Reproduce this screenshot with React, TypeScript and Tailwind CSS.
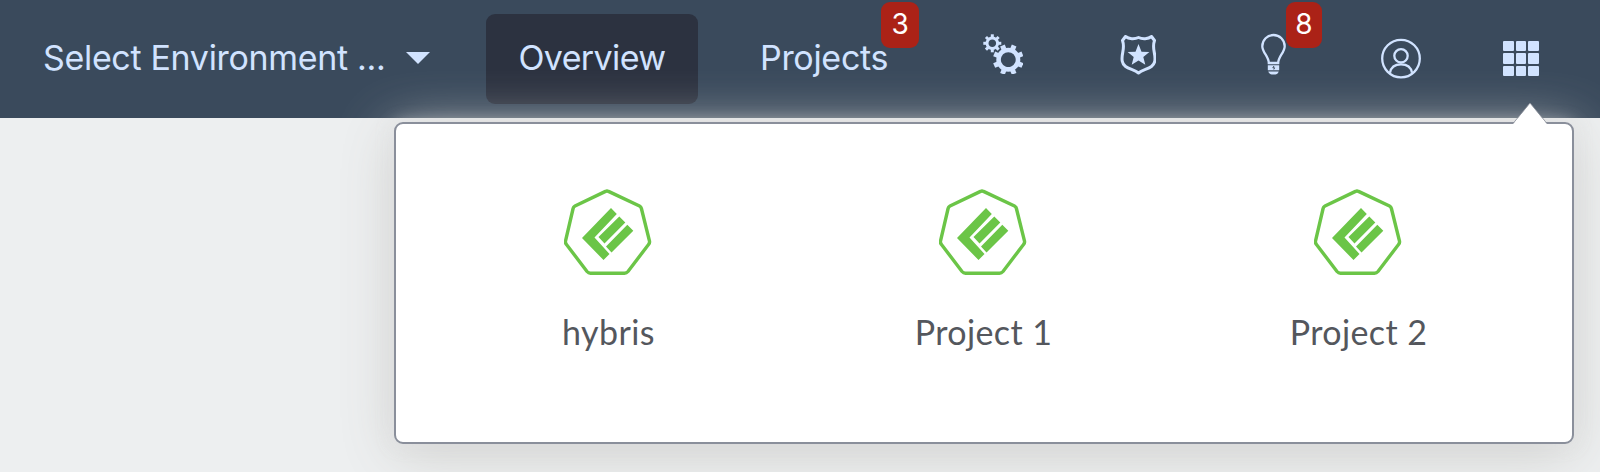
import React from "react";

const teeth = [0, 45, 90, 135, 180, 225, 270, 315];

function Gear({ cx, cy, r, hole, tooth, reach, turn }: { cx: number; cy: number; r: number; hole: number; tooth: number; reach: number; turn: number }) {
  return (
    <g transform={`translate(${cx} ${cy}) rotate(${turn})`} fill="none" stroke="currentColor">
      <circle r={(r + hole) / 2} strokeWidth={r - hole} />
      {teeth.map((a) => (
        <path key={a} d={`M0 ${-r + 1}V${-reach}`} strokeWidth={tooth} transform={`rotate(${a})`} />
      ))}
    </g>
  );
}

function GearsIcon() {
  return (
    <svg className="h-10 w-10" viewBox="0 0 40 40">
      <Gear cx={9.3} cy={9.3} r={6.7} hole={3.8} tooth={3} reach={9} turn={0} />
      <Gear cx={25.3} cy={25.7} r={12} hole={7.4} tooth={5} reach={15.3} turn={22.5} />
    </svg>
  );
}

function BadgeIcon() {
  return (
    <svg className="h-10 w-9" viewBox="0 0 36 40" fill="none" stroke="currentColor" strokeWidth="3" strokeLinejoin="round">
      <path d="M5.500 1.500C9 4.200 14.500 4.500 18.500 2.500C22.500 4.500 28 4.200 31.500 1.500L34.500 5.500C31.500 14 36 18 34.800 26C33.500 34 24 33.500 18.500 38C13 33.500 3.500 34 2.200 26C1 18 5.500 14 2.500 5.500Z" />
      <path d="M18.500 9L21.500 16.700L29.400 17.100L23.300 22.100L25.300 29.800L18.500 25.500L11.700 29.800L13.700 22.100L7.600 17.100L15.500 16.700Z" fill="currentColor" stroke="none" />
    </svg>
  );
}

function BulbIcon() {
  return (
    <svg className="h-[42px] w-[26px]" viewBox="0 0 26 42">
      <path d="M8.800 30C8.800 23.500 2.300 19.500 2.300 13.200A11.200 11.200 0 0 1 24.700 13.200C24.700 19.500 18.200 23.500 18.200 30Z" fill="none" stroke="currentColor" strokeWidth="2.300" />
      <path d="M7.800 32.300H19.200V37.200H7.800ZM8.300 38.400H18.700C18 40.500 16.500 41.600 13.500 41.600S9 40.500 8.300 38.400Z" fill="currentColor" />
      <path d="M14 33L12.800 34.800H14.600L13.800 36.500" stroke="#3a4a5c" fill="none" />
    </svg>
  );
}

function UserIcon() {
  return (
    <svg className="h-[42px] w-10" viewBox="0 0 40 42" fill="none" stroke="currentColor" strokeWidth="2.300">
      <circle cx="20" cy="20.600" r="18.800" />
      <circle cx="20" cy="17.800" r="6.700" />
      <path d="M9 34.800C10 28.500 14 26.300 20 26.300S30 28.500 31 34.800" />
    </svg>
  );
}

function GridIcon() {
  return (
    <div className="grid grid-cols-3 gap-[2px]">
      {[0, 1, 2, 3, 4, 5, 6, 7, 8].map((i) => (
        <div key={i} className="h-[10.4px] w-[10.7px] rounded-[1px] bg-[#d1e3ff]" />
      ))}
    </div>
  );
}

function ProjectLogo() {
  return (
    <svg className="h-[88px] w-[88px]" viewBox="0 0 88 88">
      <path d="M41.500 2.400Q43 1.600 44.500 2.400L75.500 17Q77 17.800 77.400 19.500L85.500 52Q85.900 54 84.500 55.500L64 82.500Q62.500 84.200 60.500 84.200H26.500Q24.500 84.200 23 82.500L2.500 55.500Q1.100 54 1.500 52L9.100 19.500Q9.500 17.800 11 17Z" fill="none" stroke="#6bc547" strokeWidth="3.400" />
      <path d="M47 19L52.800 25L30.500 48.500L45.500 65L39.500 71L18 49Z" fill="#6bc547" />
      <path d="M55.300 27.500L61.300 33.500L40.500 54.500L34.500 48ZM63.300 35.700L69.300 41.700L47.500 63.500L42 57.500Z" fill="#6bc547" />
    </svg>
  );
}

const projects = ["hybris", "Project 1", "Project 2"];

export default function App() {
  return (
    <div className="relative h-[472px] w-[1600px] overflow-hidden bg-[#edeff0] font-['Inter',sans-serif]">
      <header className="flex h-[118px] items-start bg-[#3a4a5c] text-[34px] leading-[40px] text-[#d1e3ff]">
        <div className="ml-[43px] mt-[38px] w-[363px] whitespace-nowrap tracking-[-0.33px]">Select Environment ...</div>
        <svg className="mt-[52px] h-3 w-6" viewBox="0 0 24 12"><path d="M0 0H24L12 12Z" fill="currentColor" /></svg>
        <div className="ml-[56px] mt-[14px] h-[90px] w-[212px] rounded-[9px] bg-[#2c3240] pt-6 text-center tracking-[-0.6px]">Overview</div>
        <div className="relative ml-[62px] mt-[38px] w-[223px] tracking-[-0.3px]">
          Projects
          <span className="absolute -top-9 left-[121px] h-[46px] w-[38px] rounded-[9px] bg-[#ab2217] text-center text-[28px] leading-[45px] text-white">3</span>
        </div>
        <div className="mt-[34px] w-[137px]"><GearsIcon /></div>
        <div className="mt-[35px] w-[140px]"><BadgeIcon /></div>
        <div className="relative mt-[33px] w-[121px]">
          <BulbIcon />
          <span className="absolute -top-[31px] left-[26px] h-[46px] w-[36px] rounded-[9px] bg-[#ab2217] text-center text-[28px] leading-[45px] text-white">8</span>
        </div>
        <div className="mt-[38px] w-[122px]"><UserIcon /></div>
        <div className="mt-[41px]"><GridIcon /></div>
      </header>
      <section className="absolute left-[394px] top-[122px] h-[322px] w-[1180px] rounded-[9px] border-2 border-[#8a8f9b] bg-white shadow-[0_0_16px_rgba(225,225,230,0.5),0_10px_55px_#d0d0cd]">
        <svg className="absolute -top-[22px] left-[1117px] h-[25px] w-[34px]" viewBox="0 0 34 25">
          <path d="M0 22L17 1L34 22V25H0Z" fill="white" />
          <path d="M0 21.500L17 1L34 21.500" fill="none" stroke="#8a8f9b" strokeWidth="0.8" />
        </svg>
        <div className="flex pt-[65px] pl-[24px] font-['Lato',sans-serif] text-[34px] leading-[40px] text-[#54575d]">
          {projects.map((name) => (
            <div key={name} className="flex w-[375px] flex-col items-center gap-[35px]">
              <ProjectLogo />
              <span className="pl-[2px] tracking-[0.4px]">{name}</span>
            </div>
          ))}
        </div>
      </section>
    </div>
  );
}
